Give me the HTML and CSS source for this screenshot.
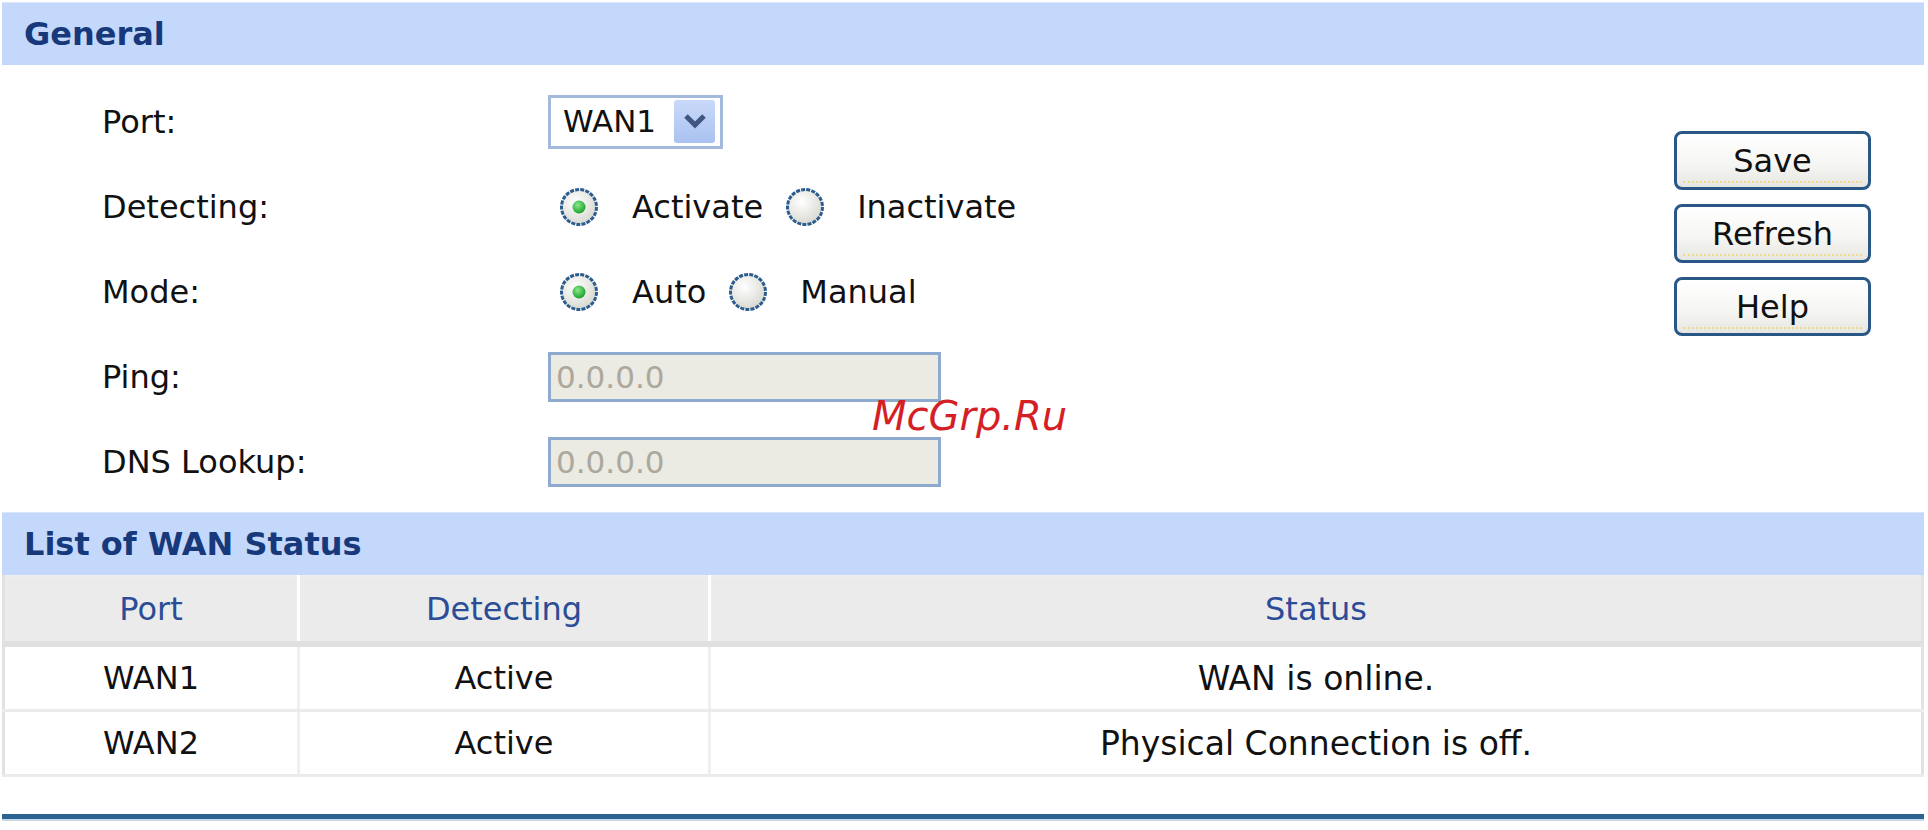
FILE: index.html
```html
<!DOCTYPE html>
<html>
<head>
<meta charset="utf-8">
<title>WAN Detection</title>
<link rel="stylesheet" href="styles.css">
</head>
<body>
<div class="page">
  <div class="band">General</div>
  <div class="general">
    <div class="form">
      <div class="label">Port:</div>
      <div class="field">
        <div class="select">
          <span class="select-text">WAN1</span>
          <span class="select-arrow">
            <svg width="24" height="16" viewBox="0 0 24 16"><path d="M3 3 L12 12 L21 3" fill="none" stroke="#3f5680" stroke-width="5"/></svg>
          </span>
        </div>
      </div>

      <div class="label">Detecting:</div>
      <div class="field radios">
        <svg class="radio" width="40" height="40" viewBox="0 0 40 40"><circle cx="20" cy="20" r="17.5" class="r-ring"/><circle cx="20" cy="20" r="6.5" class="r-dot"/></svg>
        <span class="opt">Activate</span>
        <svg class="radio next" width="40" height="40" viewBox="0 0 40 40"><circle cx="20" cy="20" r="17.5" class="r-ring"/></svg>
        <span class="opt">Inactivate</span>
      </div>

      <div class="label">Mode:</div>
      <div class="field radios">
        <svg class="radio" width="40" height="40" viewBox="0 0 40 40"><circle cx="20" cy="20" r="17.5" class="r-ring"/><circle cx="20" cy="20" r="6.5" class="r-dot"/></svg>
        <span class="opt">Auto</span>
        <svg class="radio next" width="40" height="40" viewBox="0 0 40 40"><circle cx="20" cy="20" r="17.5" class="r-ring"/></svg>
        <span class="opt">Manual</span>
      </div>

      <div class="label">Ping:</div>
      <div class="field"><div class="input">0.0.0.0</div></div>

      <div class="label">DNS Lookup:</div>
      <div class="field"><div class="input">0.0.0.0</div></div>
    </div>

    <div class="actions">
      <div class="btn">Save</div>
      <div class="btn">Refresh</div>
      <div class="btn">Help</div>
    </div>

    <span class="watermark">McGrp.Ru</span>
  </div>

  <div class="band">List of WAN Status</div>
  <table class="status">
    <colgroup><col class="c1"><col class="c2"><col></colgroup>
    <thead>
      <tr><th>Port</th><th>Detecting</th><th>Status</th></tr>
    </thead>
    <tbody>
      <tr><td>WAN1</td><td>Active</td><td>WAN is online.</td></tr>
      <tr><td>WAN2</td><td>Active</td><td>Physical Connection is off.</td></tr>
    </tbody>
  </table>
  <div class="rule"></div>
</div>
<svg width="0" height="0" class="defs">
  <defs>
    <radialGradient id="rg" cx="40%" cy="35%" r="70%">
      <stop offset="0%" stop-color="#ffffff"/>
      <stop offset="100%" stop-color="#d6d6cf"/>
    </radialGradient>
    <radialGradient id="gd" cx="40%" cy="35%" r="70%">
      <stop offset="0%" stop-color="#8ae88a"/>
      <stop offset="100%" stop-color="#139c26"/>
    </radialGradient>
  </defs>
</svg>
</body>
</html>
```
FILE: styles.css
```css
body {
  margin: 0;
  background: #ffffff;
  color: #111111;
  font-family: "DejaVu Sans", Verdana, sans-serif;
  font-size: 32px;
}

.defs {
  position: absolute;
}

.page {
  padding: 2px 4px 0 2px;
}

.band {
  box-sizing: border-box;
  height: 63px;
  display: flex;
  align-items: center;
  padding-left: 22px;
  background: #c4d8fc;
  border-top: 1px solid #d9e6fd;
  color: #17397b;
  font-weight: bold;
  font-size: 32px;
}

.general {
  position: relative;
  height: 447px;
  display: flex;
  justify-content: space-between;
}

.form {
  display: grid;
  grid-template-columns: 446px auto;
  grid-auto-rows: 85px;
  align-items: center;
  padding: 14px 0 0 100px;
}

.label {
  line-height: 1;
}

.field {
  display: flex;
  align-items: center;
}

.select {
  box-sizing: border-box;
  width: 175px;
  height: 54px;
  border: 3px solid #a2b9dc;
  display: flex;
  align-items: center;
  padding: 2px 5px 3px 12px;
  background: #ffffff;
}

.select-text {
  flex: 1;
  font-size: 31px;
}

.select-arrow {
  width: 41px;
  height: 43px;
  border-radius: 3px;
  background: linear-gradient(#c9d9f9, #aac2f1);
  display: flex;
  align-items: center;
  justify-content: center;
}

.radios .radio {
  margin-left: 11px;
}

.radios .radio.next {
  margin-left: 22px;
}

.r-ring {
  fill: url(#rg);
  stroke: #2b5d8f;
  stroke-width: 3;
  stroke-dasharray: 4 1.2;
}

.r-dot {
  fill: url(#gd);
}

.opt {
  margin-left: 33px;
}

.radios .radio.next + .opt {
  margin-left: 32px;
}

.input {
  box-sizing: border-box;
  width: 393px;
  height: 50px;
  border: 3px solid #8eaacf;
  background: #ebeae3;
  color: #aca89c;
  padding-left: 5px;
  display: flex;
  align-items: center;
  font-size: 31px;
}

.actions {
  width: 197px;
  margin: 66px 53px 0 0;
  display: flex;
  flex-direction: column;
  gap: 14px;
}

.btn {
  position: relative;
  box-sizing: border-box;
  height: 59px;
  border: 3px solid #2a5886;
  border-radius: 8px;
  background: linear-gradient(#ffffff, #f6f6f4 55%, #e6e6e2);
  display: flex;
  align-items: center;
  justify-content: center;
}

.btn::after {
  content: "";
  position: absolute;
  left: 6px;
  right: 6px;
  bottom: 4px;
  border-bottom: 2px dotted #f1d98f;
}

.watermark {
  position: absolute;
  left: 870px;
  top: 331px;
  font-size: 40px;
  line-height: 1;
  font-style: italic;
  color: #d51f26;
}

.status {
  width: 100%;
  table-layout: fixed;
  border-collapse: collapse;
  border-left: 3px solid #e2e2e2;
  border-right: 3px solid #e2e2e2;
  border-bottom: 3px solid #e2e2e2;
  font-size: 32px;
}

.status col.c1 {
  width: 295px;
}

.status col.c2 {
  width: 411px;
}

.status th {
  height: 64px;
  padding: 0;
  background: #ebebeb;
  color: #2b4c96;
  font-weight: normal;
  border-left: 3px solid #ffffff;
  border-bottom: 6px solid #e0e0e0;
  border-top: 2px solid #eeeeee;
}

.status th:first-child {
  border-left: 3px solid #e2e2e2;
}

.status td {
  height: 62px;
  padding: 0;
  text-align: center;
  border-left: 3px solid #efefef;
  border-bottom: 3px solid #ebebeb;
}

.status td:first-child {
  border-left: 3px solid #e2e2e2;
}

.status tbody td:last-child {
  font-size: 33px;
}

.rule {
  margin-top: 37px;
  height: 5px;
  background: #2b6393;
  border-bottom: 2px solid #c8d8e6;
}
```
